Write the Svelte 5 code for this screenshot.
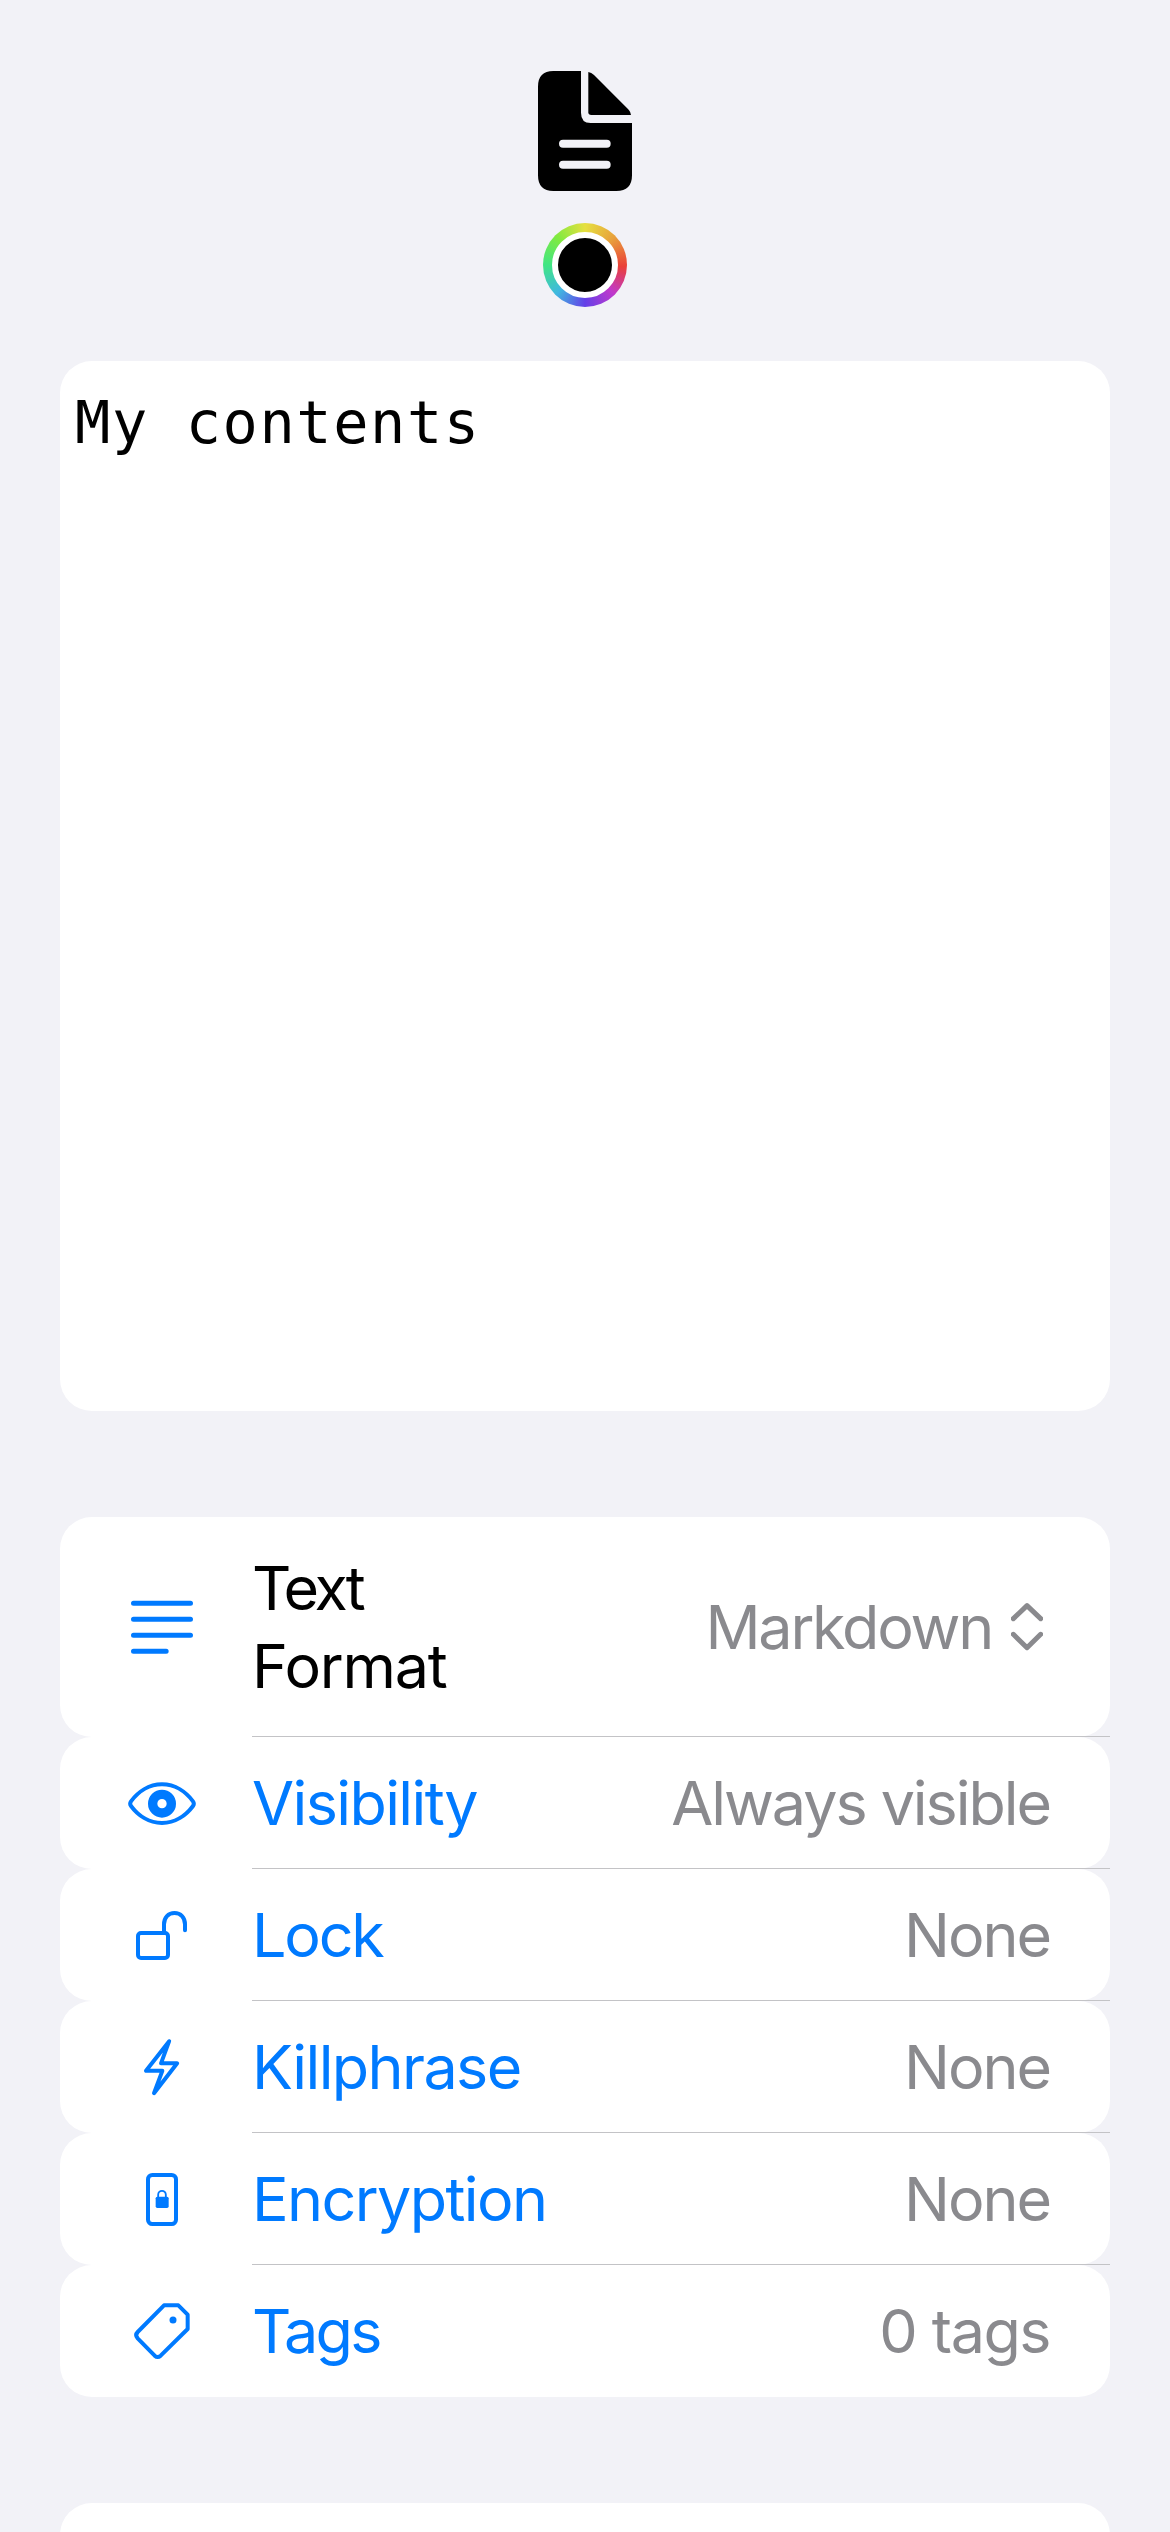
<script>
  const rows = [
    { id: 'format', label: 'Text Format', value: 'Markdown' },
    { id: 'visibility', label: 'Visibility', value: 'Always visible' },
    { id: 'lock', label: 'Lock', value: 'None' },
    { id: 'killphrase', label: 'Killphrase', value: 'None' },
    { id: 'encryption', label: 'Encryption', value: 'None' },
    { id: 'tags', label: 'Tags', value: '0 tags' }
  ];
</script>

<main class="page">
  <header class="header">
    <svg class="document" viewBox="0 0 282 360" aria-hidden="true">
      <path d="M46 0H129V125Q129 156 158 156H282V313Q282 360 235 360H46Q0 360 0 313V47Q0 0 46 0Z" />
      <path d="M151 3Q160 4 168 12L272 116Q279 124 279 132H160Q151 132 151 124Z" />
      <rect class="cut" x="63" y="206" width="155" height="24" rx="12" />
      <rect class="cut" x="63" y="269" width="155" height="24" rx="12" />
    </svg>
    <button class="color-well" aria-label="Color"><span class="swatch"></span></button>
  </header>

  <section class="editor">My contents</section>

  <section class="list">
    {#each rows as row (row.id)}
      <div class="row {row.id}">
        <svg class="icon" viewBox="0 0 216 216" aria-hidden="true">
          {#if row.id === 'format'}
            <path class="thick" d="M22.5 37H193.5M22.5 85H193.5M22.5 133H193.5M22.5 181H120.5" />
          {:else if row.id === 'visibility'}
            <path d="M15 103C35 76 68 52 108 52C148 52 181 76 201 103Q206 110 201 117C181 144 148 168 108 168C68 168 35 144 15 117Q10 110 15 103Z" />
            <circle class="iris" cx="108" cy="110" r="28" />
          {:else if row.id === 'lock'}
            <rect x="36" y="102" width="90" height="75" rx="9" />
            <path d="M114 102V76C114 55 127 42 145.500 42S177 55 177 76V94" />
          {:else if row.id === 'killphrase'}
            <path d="M129.500 30.500L60 119.500H109L84 186.500L153.500 97H105Z" />
          {:else if row.id === 'encryption'}
            <rect x="66" y="36" width="84" height="147" rx="13" />
            <path class="shackle" d="M96.500 104V95A11.500 11.500 0 0 1 119.500 95V104" />
            <rect class="solid" x="89" y="101" width="39" height="34" rx="5" />
          {:else}
            <path d="M114 31H157L185 59V102L104 182Q95 190 86 182L35 130Q26 120 35 111Z" />
            <circle class="solid" cx="141" cy="75" r="10.500" />
          {/if}
        </svg>
        {#if row.id === 'format'}
          <span class="label"><span class="tight">Text</span> Format</span>
        {:else}
          <span class="label">{row.label}</span>
        {/if}
        <span class="value">{row.value}</span>
        {#if row.id === 'format'}
          <svg class="chevrons" viewBox="0 0 96 144" aria-hidden="true">
            <path d="M7 47L48 8L89 47M7 94L48 134L89 94" />
          </svg>
        {/if}
      </div>
    {/each}
  </section>

  <section class="next-card"></section>
</main>

<style>
  :global(body) {
    background: #f2f2f7;
    overflow: hidden;
  }

  .page {
    box-sizing: border-box;
    width: 1170px;
    height: 2532px;
    padding: 71px 60px 0;
    overflow: hidden;
    background: #f2f2f7;
    color: #000;
    font: 400 61px/78px Inter, sans-serif;
  }

  .header {
    display: flex;
    flex-direction: column;
    align-items: center;
    gap: 32px;
    height: 290px;
  }

  .document {
    flex: none;
    width: 94px;
    height: 120px;
  }

  .cut {
    fill: #f2f2f7;
  }

  .color-well {
    display: grid;
    flex: none;
    place-items: center;
    width: 84px;
    height: 84px;
    padding: 0;
    border: 0;
    border-radius: 50%;
    background: conic-gradient(#e6e040, #e8a33c 45deg, #ea4038 92deg, #c038cc 135deg, #6440e8 180deg, #40b8e0 225deg, #40e684 270deg, #80ea40 315deg, #e6e040);
  }

  .swatch {
    box-sizing: border-box;
    width: 66px;
    height: 66px;
    border: 6px solid #fff;
    border-radius: 50%;
    background: #000;
  }

  .editor {
    box-sizing: border-box;
    height: 1050px;
    padding: 24px 15px;
    border-radius: 32px;
    background: #fff;
    font: 400 58.6px/76px "DejaVu Sans Mono", monospace;
    letter-spacing: 1.6px;
  }

  .list {
    margin-top: 106px;
  }

  .row {
    position: relative;
    box-sizing: border-box;
    display: flex;
    align-items: center;
    height: 132px;
    padding: 0 60px 0 66px;
    border-radius: 32px;
    background: #fff;
    letter-spacing: -1.6px;
  }

  .row.format {
    height: 220px;
  }

  .row:not(:last-child)::after {
    content: "";
    position: absolute;
    right: 0;
    bottom: 0;
    left: 192px;
    height: 1px;
    background: #c3c3c6;
  }

  .icon {
    flex: none;
    width: 72px;
    height: 72px;
    margin-right: 54px;
    fill: none;
    stroke: #007aff;
    stroke-width: 12;
    stroke-linecap: round;
    stroke-linejoin: round;
  }

  .thick {
    stroke-width: 15;
  }

  .iris {
    stroke-width: 28;
  }

  .shackle {
    stroke-width: 5.5;
  }

  .solid {
    fill: #007aff;
    stroke: none;
  }

  .label {
    color: #007aff;
  }

  .format .label {
    width: 220px;
    color: #000;
    letter-spacing: -1.2px;
  }

  .format .tight {
    letter-spacing: -3.2px;
  }

  .lock .label {
    letter-spacing: -2.2px;
  }

  .tags .label {
    letter-spacing: -2.8px;
  }

  .value {
    margin-left: auto;
    color: #8a8a8e;
    letter-spacing: -2.05px;
  }

  .format .value {
    letter-spacing: -2.2px;
  }

  .tags .value {
    letter-spacing: -1.5px;
  }

  .chevrons {
    flex: none;
    width: 32px;
    height: 48px;
    margin: 0 7px 0 19px;
    fill: none;
    stroke: #8a8a8e;
    stroke-width: 15;
    stroke-linecap: round;
    stroke-linejoin: round;
  }

  .next-card {
    height: 132px;
    margin-top: 106px;
    border-radius: 32px;
    background: #fff;
  }
</style>
